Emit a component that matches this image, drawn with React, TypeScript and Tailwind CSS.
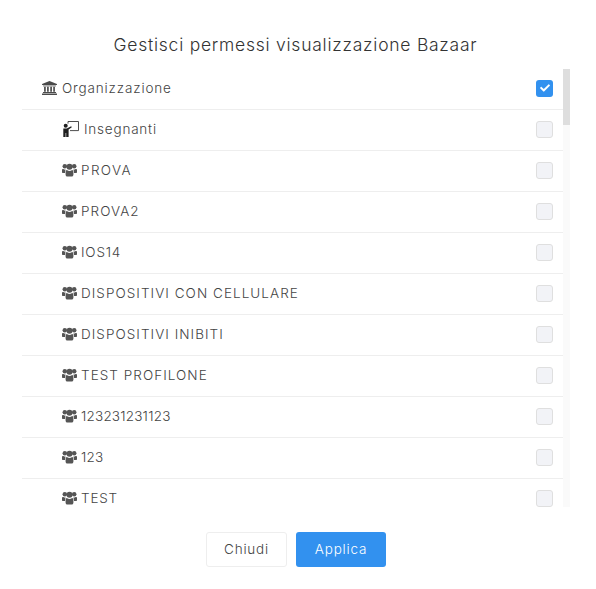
import { FaCheck } from 'react-icons/fa';

const caps = 'tracking-[1.05px]';
const digits = 'tracking-[0.2px]';

const groups = [
    { name: 'PROVA', track: 'tracking-[1.4px]' },
    { name: 'PROVA2', track: 'tracking-[1.05px]' },
    { name: 'IOS14', track: 'tracking-[0.8px]' },
    { name: 'DISPOSITIVI CON CELLULARE', track: caps },
    { name: 'DISPOSITIVI INIBITI', track: caps },
    { name: 'TEST PROFILONE', track: caps },
    { name: '123231231123', track: digits },
    { name: '123', track: digits },
    { name: 'TEST', track: 'tracking-[0.8px]' },
];

const row = 'flex h-[41px] shrink-0 items-center justify-between border-b border-[#eeeeee] pb-[2px] pr-[10px]';
const label = 'text-[13.5px] font-light text-[#444444]';

function Box({ checked }: { checked?: boolean }) {
    if (checked) {
        return <span className="flex h-[17px] w-[17px] items-center justify-center rounded-[3px] bg-[#3291ef] text-white"><FaCheck size={10} /></span>;
    }
    return <span className="h-[17px] w-[17px] rounded-[3px] border border-[#dfdfdf] bg-[#f2f3f7]" />;
}

function BankIcon() {
    return (
        <svg width="15" height="14" viewBox="0 0 16 15" className="shrink-0" fill="#4a4a4a">
            <path d="M8 0L16 3.2V4.4H0V3.2z" />
            <path d="M1 4.9H15V5.7H1z" />
            <path d="M2.2 6.2H4V11.4H2.2zM5.4 6.2H7.2V11.4H5.4zM8.8 6.2H10.6V11.4H8.8zM12 6.2H13.8V11.4H12z" />
            <path d="M1 11.8H15V12.8H1zM0 13.3H16V15H0z" />
        </svg>
    );
}

function UsersIcon() {
    return (
        <svg width="15" height="14" viewBox="0 0 16 14" className="shrink-0" fill="#555555">
            <circle cx="3" cy="3" r="2.4" />
            <circle cx="13" cy="3" r="2.4" />
            <circle cx="8" cy="3.6" r="3.2" />
            <path d="M0 6.6C0 5.8 1 5.6 2 6.2 3 6.8 3.6 6.6 4 6.5 3.4 7.6 3.4 9 3.2 10.2H1C.4 10.2 0 9.8 0 9z" />
            <path d="M16 6.6C16 5.8 15 5.6 14 6.2 13 6.8 12.4 6.6 12 6.5 12.6 7.6 12.6 9 12.8 10.2H15C15.6 10.2 16 9.8 16 9z" />
            <path d="M5.2 7C6 7.6 7 8 8 8S10 7.6 10.8 7C11.8 7 12.2 8.4 12.2 11.4 12.2 13 11.4 14 10.2 14H5.8C4.6 14 3.8 13 3.8 11.4 3.8 8.4 4.2 7 5.2 7z" />
        </svg>
    );
}

function TeacherIcon() {
    return (
        <svg width="16" height="16" viewBox="0 0 16 16" className="shrink-0">
            <circle cx="2.7" cy="4.8" r="2" fill="#1f1f1f" />
            <path d="M0.3 7.4H3.8L8.2 5.2 8.8 6.2 5.6 8.6V16H3.2V12H2.6V16H0.3z" fill="#1f1f1f" />
            <path d="M5 2.6V0.5H15.5V9.6H7" fill="none" stroke="#3a3a3a" strokeWidth="0.9" />
        </svg>
    );
}

export default function App() {
    return (
        <div className="flex h-[589px] w-[596px] flex-col bg-white" style={{ fontFamily: 'Inter, "Liberation Sans", sans-serif' }}>
            <h2 className="pr-[5px] pt-[33px] text-center text-[17.5px] font-light leading-[24px] tracking-[0.75px] text-[#333333]">Gestisci permessi visualizzazione Bazaar</h2>
            <div className="mt-[12px] flex h-[438px] pl-[22px] pr-[26px]">
                <div className="flex flex-1 flex-col overflow-hidden">
                    <div className={row}>
                        <span className="flex items-center gap-[5px] pl-[20px]">
                            <BankIcon />
                            <span className={label + ' tracking-[0.85px]'}>Organizzazione</span>
                        </span>
                        <Box checked />
                    </div>
                    <div className={row}>
                        <span className="flex items-center gap-[5px] pl-[41px]">
                            <TeacherIcon />
                            <span className={label + ' tracking-[0.8px]'}>Insegnanti</span>
                        </span>
                        <Box />
                    </div>
                    {groups.map((g) => (
                        <div key={g.name} className={row}>
                            <span className="flex items-center gap-[4px] pl-[40px]">
                                <UsersIcon />
                                <span className={label + ' ' + g.track}>{g.name}</span>
                            </span>
                            <Box />
                        </div>
                    ))}
                </div>
                <div className="w-[7px] bg-[#fafafa]">
                    <div className="h-[56px] bg-[#dedede]" />
                </div>
            </div>
            <div className="mt-[25px] flex justify-center gap-[9px] pr-[4px]">
                <button className="h-[35px] w-[81px] rounded-[3px] border border-[#eeeeee] bg-white text-[13.5px] font-light tracking-[0.8px] text-[#444444]">Chiudi</button>
                <button className="h-[35px] w-[90px] rounded-[3px] bg-[#3291ef] text-[13.5px] font-light tracking-[0.8px] text-white">Applica</button>
            </div>
        </div>
    );
}
